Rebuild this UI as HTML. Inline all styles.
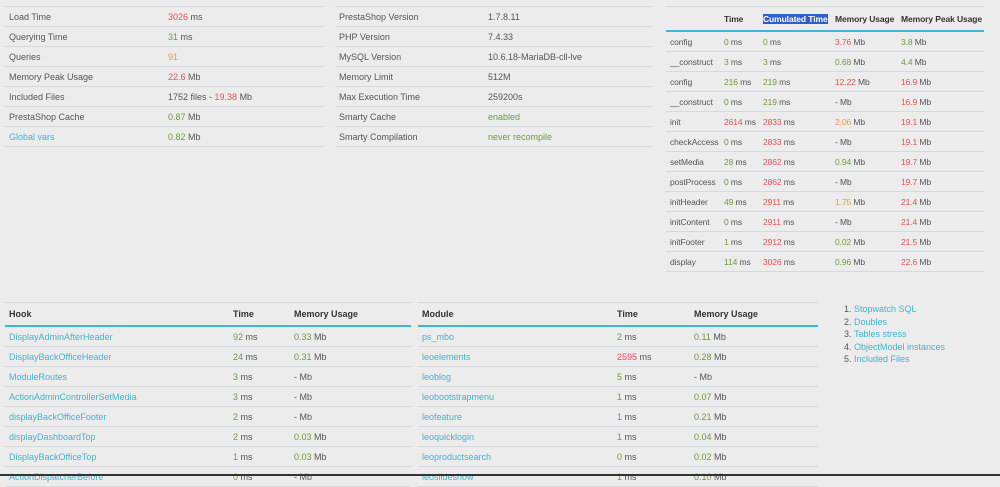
<!DOCTYPE html>
<html><head><meta charset="utf-8"><style>
html,body{margin:0;padding:0;width:1000px;height:476px;overflow:hidden;background:#ececec;font-family:"Liberation Sans",sans-serif;font-size:9px;color:#555}
table{position:absolute;border-collapse:collapse;table-layout:fixed}
td,th{height:19px;padding:0 0 0 4px;border-top:1px solid #d3dade;text-align:left;white-space:nowrap;overflow:visible}
tr:last-child td{border-bottom:1px solid #d3dade}
th{font-weight:bold;color:#333;height:22px;border-bottom:2px solid #3cb6d6}
.sm td,.sm th{font-size:8.5px;letter-spacing:-0.1px}
.g{color:#6e9b3a}.r{color:#ee4b52}.o{color:#eb9b3a}.l{color:#3fb3cf}
.hl{background:#2f5fcf;color:#fff}
ol{position:absolute;left:836px;top:303px;margin:0;padding-left:18px;line-height:12.5px;font-size:9px;color:#555}
ol li span{color:#3fb3cf}
.bar{position:absolute;left:0;top:474px;width:1000px;height:2px;background:#333;z-index:5}
</style></head><body>
<table style="left:5px;top:6px;width:318px">
<col style="width:159px"><col>
<tr><td>Load Time</td><td><span class="r">3026</span> ms</td></tr>
<tr><td>Querying Time</td><td><span class="g">31</span> ms</td></tr>
<tr><td>Queries</td><td><span class="o">91</span></td></tr>
<tr><td>Memory Peak Usage</td><td><span class="r">22.6</span> Mb</td></tr>
<tr><td>Included Files</td><td>1752 files - <span class="r">19.38</span> Mb</td></tr>
<tr><td>PrestaShop Cache</td><td><span class="g">0.87</span> Mb</td></tr>
<tr><td class="l">Global vars</td><td><span class="g">0.82</span> Mb</td></tr>
</table>
<table style="left:335px;top:6px;width:318px">
<col style="width:149px"><col>
<tr><td>PrestaShop Version</td><td>1.7.8.11</td></tr>
<tr><td>PHP Version</td><td>7.4.33</td></tr>
<tr><td>MySQL Version</td><td>10.6.18-MariaDB-cll-lve</td></tr>
<tr><td>Memory Limit</td><td>512M</td></tr>
<tr><td>Max Execution Time</td><td>259200s</td></tr>
<tr><td>Smarty Cache</td><td class="g">enabled</td></tr>
<tr><td>Smarty Compilation</td><td class="g">never recompile</td></tr>
</table>
<table class="sm" style="left:666px;top:6px;width:318px">
<col style="width:54px"><col style="width:39px"><col style="width:72px"><col style="width:66px"><col>
<tr><th style="height:23px"></th><th>Time</th><th><span class="hl">Cumulated Time</span></th><th>Memory Usage</th><th>Memory Peak Usage</th></tr>
<tr><td>config</td><td><span class="g">0</span> ms</td><td><span class="g">0</span> ms</td><td><span class="r">3.76</span> Mb</td><td><span class="g">3.8</span> Mb</td></tr>
<tr><td>__construct</td><td><span class="g">3</span> ms</td><td><span class="g">3</span> ms</td><td><span class="g">0.68</span> Mb</td><td><span class="g">4.4</span> Mb</td></tr>
<tr><td>config</td><td><span class="g">216</span> ms</td><td><span class="g">219</span> ms</td><td><span class="r">12.22</span> Mb</td><td><span class="r">16.9</span> Mb</td></tr>
<tr><td>__construct</td><td><span class="g">0</span> ms</td><td><span class="g">219</span> ms</td><td>- Mb</td><td><span class="r">16.9</span> Mb</td></tr>
<tr><td>init</td><td><span class="r">2614</span> ms</td><td><span class="r">2833</span> ms</td><td><span class="o">2.06</span> Mb</td><td><span class="r">19.1</span> Mb</td></tr>
<tr><td>checkAccess</td><td><span class="g">0</span> ms</td><td><span class="r">2833</span> ms</td><td>- Mb</td><td><span class="r">19.1</span> Mb</td></tr>
<tr><td>setMedia</td><td><span class="g">28</span> ms</td><td><span class="r">2862</span> ms</td><td><span class="g">0.94</span> Mb</td><td><span class="r">19.7</span> Mb</td></tr>
<tr><td>postProcess</td><td><span class="g">0</span> ms</td><td><span class="r">2862</span> ms</td><td>- Mb</td><td><span class="r">19.7</span> Mb</td></tr>
<tr><td>initHeader</td><td><span class="g">49</span> ms</td><td><span class="r">2911</span> ms</td><td><span class="o">1.75</span> Mb</td><td><span class="r">21.4</span> Mb</td></tr>
<tr><td>initContent</td><td><span class="g">0</span> ms</td><td><span class="r">2911</span> ms</td><td>- Mb</td><td><span class="r">21.4</span> Mb</td></tr>
<tr><td>initFooter</td><td><span class="g">1</span> ms</td><td><span class="r">2912</span> ms</td><td><span class="g">0.02</span> Mb</td><td><span class="r">21.5</span> Mb</td></tr>
<tr><td>display</td><td><span class="g">114</span> ms</td><td><span class="r">3026</span> ms</td><td><span class="g">0.96</span> Mb</td><td><span class="r">22.6</span> Mb</td></tr>
</table>
<table style="left:5px;top:302px;width:406px">
<col style="width:224px"><col style="width:61px"><col>
<tr><th>Hook</th><th>Time</th><th>Memory Usage</th></tr>
<tr><td class="l">DisplayAdminAfterHeader</td><td><span class="g">92</span> ms</td><td><span class="g">0.33</span> Mb</td></tr>
<tr><td class="l">DisplayBackOfficeHeader</td><td><span class="g">24</span> ms</td><td><span class="g">0.31</span> Mb</td></tr>
<tr><td class="l">ModuleRoutes</td><td><span class="g">3</span> ms</td><td>- Mb</td></tr>
<tr><td class="l">ActionAdminControllerSetMedia</td><td><span class="g">3</span> ms</td><td>- Mb</td></tr>
<tr><td class="l">displayBackOfficeFooter</td><td><span class="g">2</span> ms</td><td>- Mb</td></tr>
<tr><td class="l">displayDashboardTop</td><td><span class="g">2</span> ms</td><td><span class="g">0.03</span> Mb</td></tr>
<tr><td class="l">DisplayBackOfficeTop</td><td><span class="g">1</span> ms</td><td><span class="g">0.03</span> Mb</td></tr>
<tr><td class="l">ActionDispatcherBefore</td><td><span class="g">0</span> ms</td><td>- Mb</td></tr>
</table>
<table style="left:418px;top:302px;width:400px">
<col style="width:195px"><col style="width:77px"><col>
<tr><th>Module</th><th>Time</th><th>Memory Usage</th></tr>
<tr><td class="l">ps_mbo</td><td><span class="g">2</span> ms</td><td><span class="g">0.11</span> Mb</td></tr>
<tr><td class="l">leoelements</td><td><span class="r">2595</span> ms</td><td><span class="g">0.28</span> Mb</td></tr>
<tr><td class="l">leoblog</td><td><span class="g">5</span> ms</td><td>- Mb</td></tr>
<tr><td class="l">leobootstrapmenu</td><td><span class="g">1</span> ms</td><td><span class="g">0.07</span> Mb</td></tr>
<tr><td class="l">leofeature</td><td><span class="g">1</span> ms</td><td><span class="g">0.21</span> Mb</td></tr>
<tr><td class="l">leoquicklogin</td><td><span class="g">1</span> ms</td><td><span class="g">0.04</span> Mb</td></tr>
<tr><td class="l">leoproductsearch</td><td><span class="g">0</span> ms</td><td><span class="g">0.02</span> Mb</td></tr>
<tr><td class="l">leoslideshow</td><td><span class="g">1</span> ms</td><td><span class="g">0.10</span> Mb</td></tr>
</table>
<ol>
<li><span>Stopwatch SQL</span></li>
<li><span>Doubles</span></li>
<li><span>Tables stress</span></li>
<li><span>ObjectModel instances</span></li>
<li><span>Included Files</span></li>
</ol>
<div class="bar"></div>
</body></html>
